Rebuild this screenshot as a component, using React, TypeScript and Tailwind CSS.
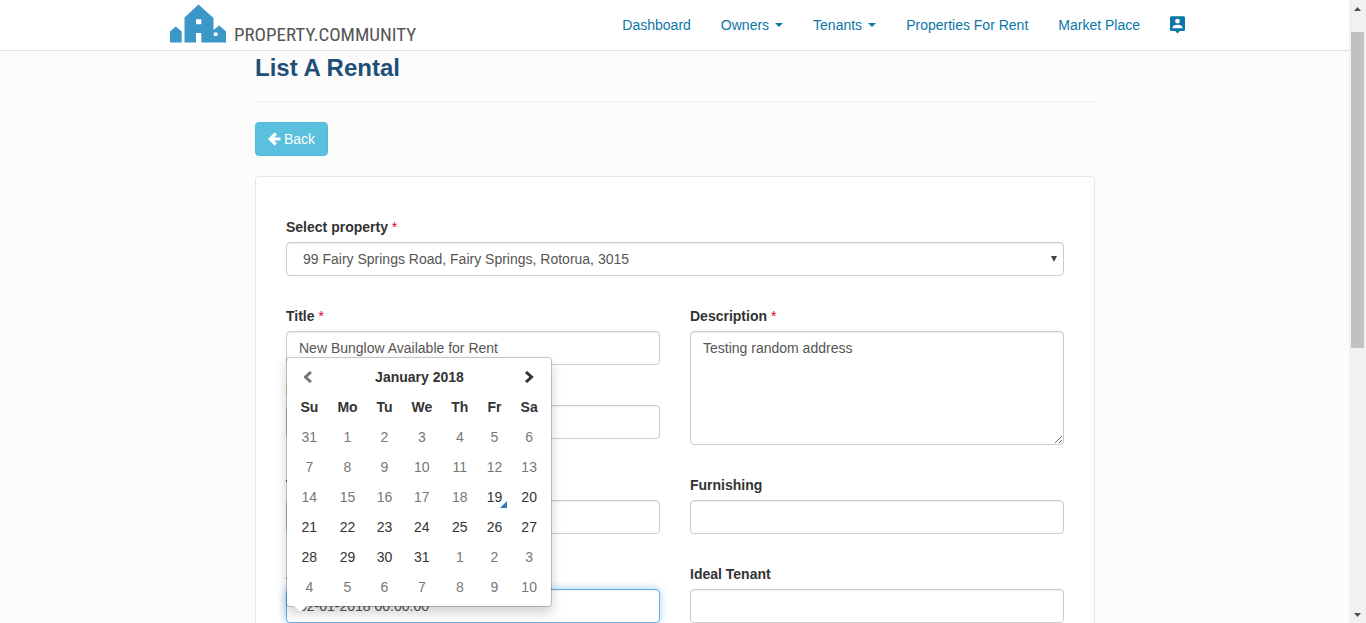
import type { ReactNode } from 'react';

const control =
  'block w-full rounded border border-[#ccc] bg-white px-3 py-1.5 text-sm leading-5 text-[#555] shadow-[inset_0_1px_1px_rgba(0,0,0,0.075)] outline-none';

const weekdays = ['Su', 'Mo', 'Tu', 'We', 'Th', 'Fr', 'Sa'];
const weeks = [
  [31, 1, 2, 3, 4, 5, 6],
  [7, 8, 9, 10, 11, 12, 13],
  [14, 15, 16, 17, 18, 19, 20],
  [21, 22, 23, 24, 25, 26, 27],
  [28, 29, 30, 31, 1, 2, 3],
  [4, 5, 6, 7, 8, 9, 10],
];
const TODAY = 19;

function Logo() {
  return (
    <a href="#" className="flex items-end gap-2" aria-label="Property Community">
      <svg viewBox="0 0 56 39" className="h-[39px] w-14" fill="#3c97c9" fillRule="evenodd">
        <path d="M0 38.500V27.500L5.800 22.500L11.700 27.500V38.500Z" />
        <path d="M14.500 38.500V13.500L28.500 0.500L43.500 14V26L49.300 21.500L56 27.500V38.500H31.300V29H26V38.500ZM26 15.300V20.200H31.300V15.300ZM43.800 28.500V32H47.500V28.500Z" />
      </svg>
      <span className="text-[19px] leading-4 text-[#555] font-['Liberation_Sans_Narrow','Roboto_Condensed','Liberation_Sans',sans-serif]">
        PROPERTY.COMMUNITY
      </span>
    </a>
  );
}

function NavLink({ children, menu }: { children: ReactNode; menu?: boolean }) {
  return (
    <a href="#" className="flex items-center gap-1.5 whitespace-nowrap text-sm leading-5 text-[#0b76a8]">
      {children}
      {menu && (
        <svg viewBox="0 0 8 4" className="h-1 w-2" fill="currentColor">
          <path d="M0 0H8L4 4Z" />
        </svg>
      )}
    </a>
  );
}

function Field({ id, label, required, children }: { id: string; label: string; required?: boolean; children: ReactNode }) {
  return (
    <div className="relative flex flex-col gap-[5px]">
      <label htmlFor={id} className="text-sm font-bold leading-5 text-[#333]">
        {label}
        {required && <span className="font-normal text-[#e3001b]"> *</span>}
      </label>
      {children}
    </div>
  );
}

function Chevron({ next }: { next?: boolean }) {
  return (
    <svg viewBox="0 0 10 12" className="mx-auto h-3 w-2.5" fill="none" stroke="currentColor" strokeWidth="3">
      <path d={next ? 'M2 1L7.500 6L2 11' : 'M7 1L1.500 6L7 11'} />
    </svg>
  );
}

function Calendar() {
  return (
    <div className="absolute bottom-4 left-0 z-10 w-[266px] rounded border border-black/20 bg-white bg-clip-padding p-1 shadow-[0_6px_12px_rgba(0,0,0,0.175)]">
      <table className="w-full border-collapse text-center text-sm leading-5 text-[#333]">
        <thead>
          <tr>
            <th className="p-[5px]">
              <button type="button" aria-label="Previous month" className="block w-full text-[#777]">
                <Chevron />
              </button>
            </th>
            <th colSpan={5} className="p-[5px]">January 2018</th>
            <th className="p-[5px]">
              <button type="button" aria-label="Next month" className="block w-full">
                <Chevron next />
              </button>
            </th>
          </tr>
          <tr>
            {weekdays.map((d) => (
              <th key={d} className="p-[5px]">{d}</th>
            ))}
          </tr>
        </thead>
        <tbody>
          {weeks.map((week, w) => (
            <tr key={w}>
              {week.map((day, i) => {
                const past = w < 2 || (w === 2 && day < TODAY);
                const following = w > 3 && day < 15;
                const today = w === 2 && day === TODAY;
                return (
                  <td key={i} className={past || following ? 'p-[5px] text-[#777]' : 'relative p-[5px]'}>
                    {day}
                    {today && (
                      <svg viewBox="0 0 7 7" className="absolute bottom-1 right-1 h-[7px] w-[7px]" fill="#337ab7">
                        <path d="M7 0V7H0Z" />
                      </svg>
                    )}
                  </td>
                );
              })}
            </tr>
          ))}
        </tbody>
      </table>
      <svg viewBox="0 0 14 7" className="absolute left-1.5 top-full h-[7px] w-3.5">
        <path d="M0 0H14L7 7Z" fill="#ccc" />
        <path d="M1 0H13L7 6Z" fill="#fff" />
      </svg>
    </div>
  );
}

function Scrollbar() {
  return (
    <div aria-hidden="true" className="flex w-[17px] shrink-0 flex-col items-center justify-between bg-[#f1f1f1] py-1.5">
      <div className="flex min-h-0 flex-1 flex-col items-center gap-[21px]">
        <svg viewBox="0 0 7 4" className="mt-px h-1 w-[7px] shrink-0" fill="#505050"><path d="M0 4L3.500 0L7 4Z" /></svg>
        <div className="h-[52%] w-[13px] bg-[#c1c1c1]" />
      </div>
      <svg viewBox="0 0 7 4" className="h-1 w-[7px] shrink-0" fill="#505050"><path d="M0 0L3.500 4L7 0Z" /></svg>
    </div>
  );
}

export default function App() {
  return (
    <div className="flex h-screen overflow-hidden bg-[#fcfcfc] font-['Liberation_Sans',Arial,sans-serif] text-[#333]">
      <div className="flex min-w-0 flex-1 flex-col">
        <header className="shrink-0 border-b border-[#e0e0e0] bg-white">
          <nav className="mx-auto flex h-[50px] w-full max-w-[1023px] items-center justify-between pb-1 pl-[7px]">
            <Logo />
            <div className="flex items-center gap-[30px] pt-1">
              <NavLink>Dashboard</NavLink>
              <NavLink menu>Owners</NavLink>
              <NavLink menu>Tenants</NavLink>
              <NavLink>Properties For Rent</NavLink>
              <NavLink>Market Place</NavLink>
              <a href="#" aria-label="Account" className="text-[#0b76a8]">
                <svg viewBox="0 0 16 18" className="h-[18px] w-4" fill="currentColor" fillRule="evenodd">
                  <path d="M1.500 0.300H13.500Q15 0.300 15 1.800V13.500Q15 15 13.500 15H9.800L7.500 17.500L5.200 15H1.500Q0 15 0 13.500V1.800Q0 0.300 1.500 0.300ZM7.500 2.800A2.400 2.400 0 1 0 7.500 7.600A2.400 2.400 0 1 0 7.500 2.800ZM2.500 12.200H12.500V11.300C12.500 9.600 9.200 8.800 7.500 8.800S2.500 9.600 2.500 11.300Z" />
                </svg>
              </a>
            </div>
          </nav>
        </header>

        <main className="min-h-0 flex-1 overflow-hidden">
          <div className="mx-auto flex w-full max-w-[841px] flex-col items-start gap-5 pl-px">
            <h1 className="w-full border-b border-[#eee] pb-5 pt-1 text-2xl font-bold leading-[26px] text-[#1f4e79]">List A Rental</h1>
            <button type="button" className="flex items-center gap-[3px] rounded border border-[#51bcdb] bg-[#5bc0de] px-3 py-1.5 text-sm leading-5 text-white">
              <svg viewBox="0 0 13 14" className="h-3.5 w-[13px]" fill="none" stroke="currentColor" strokeWidth="3.200">
                <path d="M7.800 1.500L2.300 7L7.800 12.500M3 7H12.500" />
              </svg>
              Back
            </button>

            <form className="grid w-full grid-cols-2 gap-[30px] rounded-sm border border-[#e7e7e7] bg-white px-[30px] pb-10 pt-10">
              <div className="col-span-2">
                <Field id="property" label="Select property" required>
                  <div className="relative">
                    <select id="property" className={`${control} appearance-none pl-4`}>
                      <option>99 Fairy Springs Road, Fairy Springs, Rotorua, 3015</option>
                    </select>
                    <svg viewBox="0 0 6 6" className="pointer-events-none absolute right-[7px] top-[14px] h-1.5 w-1.5" fill="#444">
                      <path d="M0 0H6L3 6Z" />
                    </svg>
                  </div>
                </Field>
              </div>
              <div className="flex flex-col gap-[15px]">
                <Field id="title" label="Title" required>
                  <input id="title" className={control} defaultValue="New Bunglow Available for Rent" />
                </Field>
                <Field id="rent" label="Rent" required>
                  <input id="rent" className={control} />
                </Field>
              </div>
              <Field id="description" label="Description" required>
                <textarea id="description" rows={5} className={`${control} resize-y`} defaultValue="Testing random address" />
              </Field>
              <Field id="type" label="Type">
                <input id="type" className={control} />
              </Field>
              <Field id="furnishing" label="Furnishing">
                <input id="furnishing" className={control} />
              </Field>
              <Field id="available" label="Available Date">
                <input
                  id="available"
                  className="block w-full rounded border border-[#66afe9] bg-white px-3 py-1.5 text-sm leading-5 text-[#555] shadow-[inset_0_1px_1px_rgba(0,0,0,0.075),0_0_8px_rgba(102,175,233,0.6)] outline-none"
                  defaultValue="02-01-2018 00:00:00"
                />
                <Calendar />
              </Field>
              <Field id="tenant" label="Ideal Tenant">
                <input id="tenant" className={control} />
              </Field>
            </form>
          </div>
        </main>
      </div>
      <Scrollbar />
    </div>
  );
}
